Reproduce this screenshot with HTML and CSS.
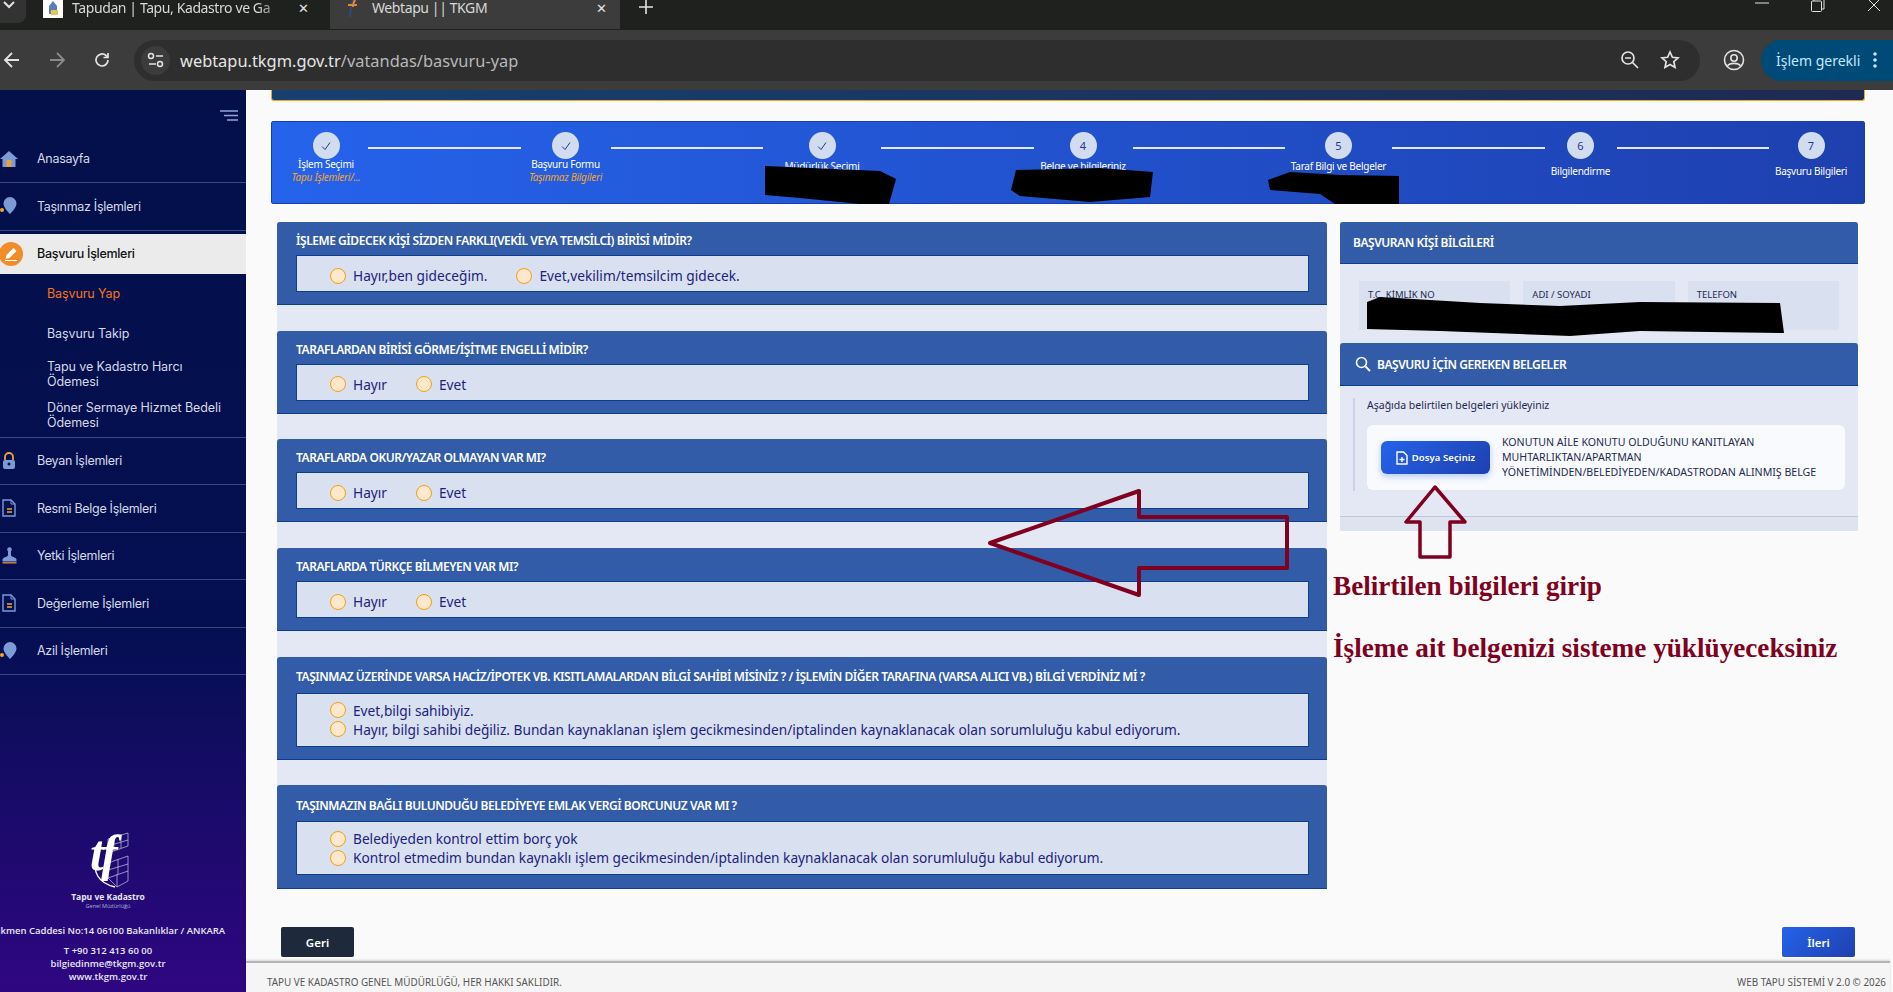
FILE: index.html
```html
<html>
<head>
  <title>Webtapu || TKGM</title>
  <link rel="stylesheet" href="styles.css">
</head>
<body>

<div class="browser">
  <div class="tabs">
    <div class="tab-menu">
      <svg width="14" height="14" viewBox="0 0 14 14"><path d="M2 2l5 5 5-5" fill="none" stroke="#e3e3e3" stroke-width="2"/></svg>
    </div>
    <div class="tab">
      <svg class="favicon" width="20" height="20" viewBox="0 0 20 20"><rect width="20" height="20" fill="#fff"/><path d="M10 3l4 5v8H6V8z" fill="#5b7fb5"/><rect x="8" y="12" width="7" height="5" fill="#e6c65a"/></svg>
      <span class="tab-title tab-fade">Tapudan | Tapu, Kadastro ve Ga</span>
      <span class="tab-close">&#10005;</span>
    </div>
    <div class="tab tab-active">
      <svg class="favicon" width="20" height="20" viewBox="0 0 20 20"><path d="M11 1c-1 5-3 9-3 18" fill="none" stroke="#2d4a7c" stroke-width="2"/><path d="M6 7h9" stroke="#e8862e" stroke-width="2"/><path d="M14 0c-2 3-3 6-3 9" fill="none" stroke="#e8862e" stroke-width="2"/></svg>
      <span class="tab-title">Webtapu || TKGM</span>
      <span class="tab-close">&#10005;</span>
    </div>
    <div class="tab-new">
      <svg width="14" height="14" viewBox="0 0 14 14"><path d="M7 0v14M0 7h14" stroke="#e3e3e3" stroke-width="1.6"/></svg>
    </div>
    <div class="win-controls">
      <svg width="14" height="10" viewBox="0 0 14 10"><path d="M0 5h14" stroke="#e3e3e3" stroke-width="1"/></svg>
      <svg width="14" height="14" viewBox="0 0 14 14"><rect x="0.5" y="3" width="10" height="10.500" rx="1" fill="none" stroke="#e3e3e3"/><path d="M3 3V1h9a1 1 0 0 1 1 1v9h-2.500" fill="none" stroke="#e3e3e3"/></svg>
      <svg width="14" height="14" viewBox="0 0 14 14"><path d="M1 1l12 12M13 1L1 13" stroke="#e3e3e3" stroke-width="1"/></svg>
    </div>
  </div>
  <div class="toolbar">
    <svg class="nav-icon" width="18" height="18" viewBox="0 0 18 18"><path d="M16 9H2M9 2L2 9l7 7" fill="none" stroke="#e3e3e3" stroke-width="1.800"/></svg>
    <svg class="nav-icon" width="18" height="18" viewBox="0 0 18 18"><path d="M2 9h14M9 2l7 7-7 7" fill="none" stroke="#8a8a8a" stroke-width="1.800"/></svg>
    <svg class="nav-icon" width="18" height="18" viewBox="0 0 18 18"><path d="M15 9a6 6 0 1 1-2-4.500L15 6.500M15 2v4.500h-4.500" fill="none" stroke="#e3e3e3" stroke-width="1.700"/></svg>
    <div class="omnibox">
      <div class="site-info">
        <svg width="18" height="16" viewBox="0 0 18 16"><circle cx="4" cy="4" r="2.500" fill="none" stroke="#e3e3e3" stroke-width="1.500"/><path d="M9 4h7M2 12h7" stroke="#e3e3e3" stroke-width="1.500"/><circle cx="13" cy="12" r="2.500" fill="none" stroke="#e3e3e3" stroke-width="1.500"/></svg>
      </div>
      <span class="url">webtapu.tkgm.gov.tr<span class="url-path">/vatandas/basvuru-yap</span></span>
      <svg class="omni-icon" width="20" height="20" viewBox="0 0 20 20"><circle cx="8" cy="8" r="6" fill="none" stroke="#e3e3e3" stroke-width="1.700"/><path d="M5 8h6M12.500 12.500L18 18" stroke="#e3e3e3" stroke-width="1.700"/></svg>
      <svg class="omni-icon" width="20" height="20" viewBox="0 0 20 20"><path d="M10 2l2.400 5.300 5.600.6-4.200 3.800 1.200 5.700L10 14.500l-5 2.900 1.200-5.700L2 7.900l5.600-.6z" fill="none" stroke="#e3e3e3" stroke-width="1.700"/></svg>
    </div>
    <svg class="profile" width="22" height="22" viewBox="0 0 22 22"><circle cx="11" cy="11" r="9.500" fill="none" stroke="#e3e3e3" stroke-width="1.600"/><circle cx="11" cy="9" r="3.200" fill="none" stroke="#e3e3e3" stroke-width="1.600"/><path d="M4.500 17c2-3.500 11-3.500 13 0" fill="none" stroke="#e3e3e3" stroke-width="1.600"/></svg>
    <div class="action-pill">
      <span>İşlem gerekli</span>
      <svg width="4" height="18" viewBox="0 0 4 18"><circle cx="2" cy="3" r="1.800" fill="#c2e7ff"/><circle cx="2" cy="9" r="1.800" fill="#c2e7ff"/><circle cx="2" cy="15" r="1.800" fill="#c2e7ff"/></svg>
    </div>
  </div>
</div>

<div class="app">
  <aside class="sidebar">
    <div class="burger">
      <svg width="18" height="11" viewBox="0 0 18 11"><path d="M0 1h18M4 5.500h14M7 10h11" stroke="#8ea6d8" stroke-width="1.500"/></svg>
    </div>
    <a class="menu-item menu-first">
      <svg class="menu-icon" width="18" height="18" viewBox="0 0 18 18"><path d="M9 1L0 9h2.500v8h13V9H18z" fill="#7b9ad6"/><rect x="6.500" y="10" width="5" height="7" fill="#e8a33d"/></svg>
      Anasayfa
    </a>
    <a class="menu-item">
      <svg class="menu-icon" width="18" height="18" viewBox="0 0 18 18"><path d="M10 0a6.500 6.500 0 0 1 6.500 6.500C16.500 11 10 17 10 17S3.500 11 3.500 6.500A6.500 6.500 0 0 1 10 0z" fill="#7b9ad6"/><circle cx="2" cy="13" r="2" fill="#f5a623"/></svg>
      Taşınmaz İşlemleri
    </a>
    <a class="menu-item menu-active">
      <span class="menu-badge">
        <svg width="14" height="14" viewBox="0 0 14 14"><path d="M9.500 1l3 3-7 7-4 1 1-4z" fill="#fff"/><path d="M1 13.500h12" stroke="#fff"/></svg>
      </span>
      Başvuru İşlemleri
    </a>
    <div class="submenu">
      <a class="sub-item sub-current">Başvuru Yap</a>
      <a class="sub-item">Başvuru Takip</a>
      <a class="sub-item sub-double">Tapu ve Kadastro Harcı<br>Ödemesi</a>
      <a class="sub-item sub-double">Döner Sermaye Hizmet Bedeli<br>Ödemesi</a>
    </div>
    <a class="menu-item">
      <svg class="menu-icon" width="18" height="18" viewBox="0 0 18 18"><path d="M5 8V5a4 4 0 0 1 8 0v3" fill="none" stroke="#e8a33d" stroke-width="1.800"/><rect x="3" y="8" width="12" height="9" rx="2" fill="#7b9ad6"/><circle cx="9" cy="12" r="1.500" fill="#04104a"/></svg>
      Beyan İşlemleri
    </a>
    <a class="menu-item">
      <svg class="menu-icon" width="18" height="18" viewBox="0 0 18 18"><path d="M3 1h8l4 4v12H3z" fill="none" stroke="#7b9ad6" stroke-width="1.400"/><path d="M11 1v4h4" fill="none" stroke="#7b9ad6"/><path d="M7 10h5M7 13h5" stroke="#f5a623" stroke-width="1.400"/></svg>
      Resmi Belge İşlemleri
    </a>
    <a class="menu-item">
      <svg class="menu-icon" width="18" height="18" viewBox="0 0 18 18"><circle cx="9.500" cy="2.500" r="2.300" fill="#7b9ad6"/><path d="M8 4h3v4c0 2 5 2 5.500 4.500V14.500H2.500V12.500C3 10 8 10 8 8z" fill="#7b9ad6"/><rect x="2.500" y="15" width="14" height="1.600" fill="#c47a24"/></svg>
      Yetki İşlemleri
    </a>
    <a class="menu-item">
      <svg class="menu-icon" width="18" height="18" viewBox="0 0 18 18"><path d="M3 1h8l4 4v12H3z" fill="none" stroke="#7b9ad6" stroke-width="1.400"/><path d="M11 1v4h4" fill="none" stroke="#7b9ad6"/><path d="M7 10h5M7 13h5" stroke="#f5a623" stroke-width="1.400"/></svg>
      Değerleme İşlemleri
    </a>
    <a class="menu-item">
      <svg class="menu-icon" width="18" height="18" viewBox="0 0 18 18"><path d="M10 0a6.500 6.500 0 0 1 6.500 6.500C16.500 11 10 17 10 17S3.500 11 3.500 6.500A6.500 6.500 0 0 1 10 0z" fill="#7b9ad6"/><circle cx="2" cy="13" r="2" fill="#f5a623"/></svg>
      Azil İşlemleri
    </a>

    <div class="side-footer">
      <svg class="logo" width="40" height="56" viewBox="0 0 40 56">
        <path d="M18 6L38 0V13L18 20ZM18 30L38 23V38L18 45ZM24 4V18M31 2V15M28 26V41M18 13L38 7M18 37L38 31" fill="none" stroke="#c3cbe2" stroke-width="0.700"/>
        <path d="M18 45L27 54M38 38V48L27 54M27 41V54" fill="none" stroke="#c3cbe2" stroke-width="0.700"/>
        <path d="M7 26C2 38 8 50 25 54" fill="none" stroke="#fff" stroke-width="1.400"/>
        <text class="logo-text" x="0" y="37">tf</text>
      </svg>
      <div class="org">Tapu ve Kadastro</div>
      <div class="org-sub">Genel Müdürlüğü</div>
      <div class="address">Dikmen Caddesi No:14 06100 Bakanlıklar / ANKARA</div>
      <div class="contact">T +90 312 413 60 00</div>
      <div class="contact">bilgiedinme@tkgm.gov.tr</div>
      <div class="contact">www.tkgm.gov.tr</div>
    </div>
  </aside>

  <main class="main">
    <div class="content">
      <div class="topbar"></div>

      <div class="stepper">
        <div class="step s1">
          <div class="circle"><svg width="12" height="12" viewBox="0 0 12 12"><path d="M2 6.500l3 3 5-7" fill="none" stroke="#1e3a8a" stroke-width="1"/></svg></div>
          <div class="step-text"><div class="step-label">İşlem Seçimi</div><div class="step-sub">Tapu İşlemleri/...</div></div>
        </div>
        <div class="step-line"></div>
        <div class="step s2">
          <div class="circle"><svg width="12" height="12" viewBox="0 0 12 12"><path d="M2 6.500l3 3 5-7" fill="none" stroke="#1e3a8a" stroke-width="1"/></svg></div>
          <div class="step-text"><div class="step-label">Başvuru Formu</div><div class="step-sub">Taşınmaz Bilgileri</div></div>
        </div>
        <div class="step-line"></div>
        <div class="step s3">
          <div class="circle"><svg width="12" height="12" viewBox="0 0 12 12"><path d="M2 6.500l3 3 5-7" fill="none" stroke="#1e3a8a" stroke-width="1"/></svg></div>
          <div class="step-text step-raised"><div class="step-label">Müdürlük Seçimi</div></div>
        </div>
        <div class="step-line"></div>
        <div class="step s4">
          <div class="circle">4</div>
          <div class="step-text step-raised"><div class="step-label">Belge ve bilgileriniz</div></div>
        </div>
        <div class="step-line"></div>
        <div class="step s5">
          <div class="circle">5</div>
          <div class="step-text step-raised"><div class="step-label">Taraf Bilgi ve Belgeler</div></div>
        </div>
        <div class="step-line"></div>
        <div class="step s6">
          <div class="circle">6</div>
          <div class="step-text"><div class="step-label">Bilgilendirme</div></div>
        </div>
        <div class="step-line"></div>
        <div class="step s7">
          <div class="circle">7</div>
          <div class="step-text"><div class="step-label">Başvuru Bilgileri</div></div>
        </div>
      </div>

      <div class="columns">
        <div class="questions">
          <div class="card">
            <div class="card-title">İŞLEME GİDECEK KİŞİ SİZDEN FARKLI(VEKİL VEYA TEMSİLCİ) BİRİSİ MİDİR?</div>
            <div class="answers">
              <label class="radio"><span class="dot"></span>Hayır,ben gideceğim.</label>
              <label class="radio"><span class="dot"></span>Evet,vekilim/temsilcim gidecek.</label>
            </div>
          </div>
          <div class="card">
            <div class="card-title">TARAFLARDAN BİRİSİ GÖRME/İŞİTME ENGELLİ MİDİR?</div>
            <div class="answers">
              <label class="radio"><span class="dot"></span>Hayır</label>
              <label class="radio"><span class="dot"></span>Evet</label>
            </div>
          </div>
          <div class="card">
            <div class="card-title">TARAFLARDA OKUR/YAZAR OLMAYAN VAR MI?</div>
            <div class="answers">
              <label class="radio"><span class="dot"></span>Hayır</label>
              <label class="radio"><span class="dot"></span>Evet</label>
            </div>
          </div>
          <div class="card">
            <div class="card-title">TARAFLARDA TÜRKÇE BİLMEYEN VAR MI?</div>
            <div class="answers">
              <label class="radio"><span class="dot"></span>Hayır</label>
              <label class="radio"><span class="dot"></span>Evet</label>
            </div>
          </div>
          <div class="card card-tall">
            <div class="card-title">TAŞINMAZ ÜZERİNDE VARSA HACİZ/İPOTEK VB. KISITLAMALARDAN BİLGİ SAHİBİ MİSİNİZ ? / İŞLEMİN DİĞER TARAFINA (VARSA ALICI VB.) BİLGİ VERDİNİZ Mİ ?</div>
            <div class="answers answers-stack">
              <label class="radio"><span class="dot"></span>Evet,bilgi sahibiyiz.</label>
              <label class="radio"><span class="dot"></span>Hayır, bilgi sahibi değiliz. Bundan kaynaklanan işlem gecikmesinden/iptalinden kaynaklanacak olan sorumluluğu kabul ediyorum.</label>
            </div>
          </div>
          <div class="card card-tall">
            <div class="card-title">TAŞINMAZIN BAĞLI BULUNDUĞU BELEDİYEYE EMLAK VERGİ BORCUNUZ VAR MI ?</div>
            <div class="answers answers-stack">
              <label class="radio"><span class="dot"></span>Belediyeden kontrol ettim borç yok</label>
              <label class="radio"><span class="dot"></span>Kontrol etmedim bundan kaynaklı işlem gecikmesinden/iptalinden kaynaklanacak olan sorumluluğu kabul ediyorum.</label>
            </div>
          </div>
        </div>

        <div class="side-panel">
          <div class="panel-head">BAŞVURAN KİŞİ BİLGİLERİ</div>
          <div class="person">
            <div class="field">T.C. KİMLİK NO</div>
            <div class="field">ADI / SOYADI</div>
            <div class="field">TELEFON</div>
          </div>
          <div class="panel-head panel-head-icon">
            <svg width="16" height="16" viewBox="0 0 16 16"><circle cx="6.500" cy="6.500" r="5" fill="none" stroke="#fff" stroke-width="1.600"/><path d="M10.500 10.500L15 15" stroke="#fff" stroke-width="1.800"/></svg>
            BAŞVURU İÇİN GEREKEN BELGELER
          </div>
          <div class="docs">
            <div class="docs-inner">
              <div class="docs-hint">Aşağıda belirtilen belgeleri yükleyiniz</div>
              <div class="doc-card">
                <button class="file-btn">
                  <svg width="12" height="14" viewBox="0 0 12 14"><path d="M1 1h6.500L11 4.500V13H1z" fill="none" stroke="#fff" stroke-width="1.400"/><path d="M6 6v5M3.500 8.500h5" stroke="#fff" stroke-width="1.400"/></svg>
                  Dosya Seçiniz
                </button>
                <div class="doc-name">KONUTUN AİLE KONUTU OLDUĞUNU KANITLAYAN MUHTARLIKTAN/APARTMAN YÖNETİMİNDEN/BELEDİYEDEN/KADASTRODAN ALINMIŞ BELGE</div>
              </div>
            </div>
          </div>
          <div class="panel-foot"></div>
        </div>
      </div>

      <div class="actions">
        <button class="btn btn-back">Geri</button>
        <button class="btn btn-next">İleri</button>
      </div>
    </div>

    <footer class="footer">
      <span>TAPU VE KADASTRO GENEL MÜDÜRLÜĞÜ, HER HAKKI SAKLIDIR.</span>
      <span>WEB TAPU SİSTEMİ V 2.0 © 2026</span>
    </footer>
  </main>
</div>

<!-- marks drawn on top of the screenshot -->
<svg class="marks" width="1893" height="992" viewBox="0 0 1893 992">
  <path class="blackout" d="M765 166L880 171L896 179L889 204L860 204L800 198L765 195Z"/>
  <path class="blackout" d="M1016 170L1100 168L1153 172L1150 197L1090 202L1020 196L1011 190Z"/>
  <path class="blackout" d="M1290 172L1340 175L1399 176V204H1335L1320 194L1270 190L1268 180Z"/>
  <path class="blackout" d="M1367 302L1380 297L1480 303L1560 306L1640 302L1780 303L1784 333L1640 331L1570 336L1440 331L1367 329Z"/>
  <path class="arrow" d="M990 543L1139 491V517H1287V568H1139V595Z"/>
  <path class="arrow arrow-up" d="M1435 487L1406 522H1420V557H1450V522H1465Z"/>
  <text class="note" x="1333" y="595">Belirtilen bilgileri girip</text>
  <text class="note" x="1333" y="657">İşleme ait belgenizi sisteme yüklüyeceksiniz</text>
</svg>

</body>
</html>
```

FILE: styles.css
```css
* {
  box-sizing: border-box;
}

html,
body {
  margin: 0;
  height: 992px;
  overflow: hidden;
}

body {
  position: relative;
  display: flex;
  flex-direction: column;
  font-family: "Noto Sans", sans-serif;
  background: #fafafa;
}

/* browser chrome */
.browser {
  height: 90px;
  flex: none;
}

.tabs {
  height: 30px;
  background: #1f211f;
  display: flex;
  align-items: flex-start;
  color: #e3e3e3;
  overflow: hidden;
}

.tab-menu {
  width: 26px;
  height: 23px;
  background: #333;
  border-radius: 0 0 8px 0;
  padding: 0 0 0 2px;
}

.tab {
  display: flex;
  align-items: center;
  height: 30px;
  padding: 0 21px 13px 0;
  margin-top: -1px;
}

.tab:nth-child(2) {
  width: 304px;
  padding-left: 17px;
}

.tab-active {
  width: 290px;
  background: #3c3c3c;
  padding-left: 12px;
  padding-right: 13px;
}

.favicon {
  flex: none;
  margin-right: 9px;
}

.tab-active .favicon {
  margin-right: 10px;
}

.tab-title {
  flex: 1;
  white-space: nowrap;
  overflow: hidden;
  font-size: 14px;
  letter-spacing: -0.4px;
  color: #d8d8d8;
}

.tab-fade {
  -webkit-mask-image: linear-gradient(to right, #000 85%, transparent);
}

.tab-close {
  font-size: 13px;
  margin-left: 8px;
}

.tab-new {
  margin: 0 0 0 19px;
}

.win-controls {
  margin-left: auto;
  display: flex;
  gap: 42px;
  padding: 0 12px 0 0;
  margin-top: -2px;
}

.toolbar {
  height: 60px;
  background: #3c3c3c;
  display: flex;
  align-items: center;
  padding-left: 3px;
}

.nav-icon {
  margin-right: 27px;
}

.omnibox {
  width: 1566px;
  margin-left: -4px;
  height: 41px;
  background: #2e2e2e;
  border-radius: 21px;
  display: flex;
  align-items: center;
  padding: 0 20px 0 7px;
}

.site-info {
  width: 29px;
  height: 29px;
  border-radius: 50%;
  background: #3c3c3c;
  display: flex;
  align-items: center;
  justify-content: center;
  margin-right: 10px;
}

.url {
  flex: 1;
  font-size: 16.400px;
  color: #e6e6e6;
}

.url-path {
  color: #b8b8b8;
}

.omni-icon {
  margin-left: 20px;
}

.profile {
  margin-left: 23px;
}

.action-pill {
  margin-left: 16px;
  flex: 1;
  height: 41px;
  background: #004a77;
  border-radius: 21px 0 0 21px;
  color: #c2e7ff;
  font-size: 14px;
  display: flex;
  align-items: center;
  padding-left: 15px;
  gap: 13px;
}

/* page */
.app {
  flex: 1;
  display: flex;
  min-height: 0;
}

.sidebar {
  width: 246px;
  flex: none;
  background: linear-gradient(to bottom, #04104a 0%, #040f52 60%, #2f0682 100%);
  display: flex;
  flex-direction: column;
  font-family: "Inter", sans-serif;
  overflow: hidden;
}

.burger {
  height: 45px;
  padding: 20px 8px 0 0;
  text-align: right;
  flex: none;
}

.menu-item {
  height: 47.500px;
  flex: none;
  display: flex;
  align-items: center;
  font-size: 12.500px;
  letter-spacing: -0.3px;
  color: #d6d9e8;
  border-bottom: 1px solid #3c4683;
}

.menu-first {
  height: 48px;
}

.menu-icon {
  width: 18px;
  margin: 0 19px 0 0;
  flex: none;
}

.menu-active {
  height: 40px;
  margin-top: 3px;
  background: #ebebeb;
  color: #111;
  border-bottom: none;
  font-weight: 500;
}

.menu-badge {
  width: 24px;
  height: 24px;
  margin: 0 14px 0 -1px;
  background: #f28c28;
  border-radius: 50%;
  display: flex;
  align-items: center;
  justify-content: center;
  flex: none;
}

.submenu {
  height: 164px;
  flex: none;
  padding-left: 47px;
  border-bottom: 1px solid #3c4683;
}

.sub-item {
  display: flex;
  align-items: center;
  height: 40px;
  font-size: 12.500px;
  letter-spacing: -0.1px;
  color: #d6d9e8;
  line-height: 15px;
}

.sub-double {
  display: block;
  height: 41px;
  padding-top: 5px;
}

.sub-current {
  color: #f97316;
}

.side-footer {
  margin-top: auto;
  height: 159px;
  flex: none;
  text-align: center;
  color: #e6e8f4;
  font-family: "Open Sans", sans-serif;
  font-weight: 600;
  font-size: 9.500px;
  display: flex;
  flex-direction: column;
  align-items: center;
  padding-right: 30px;
  white-space: nowrap;
}

.logo {
  margin-left: 4px;
  flex: none;
  overflow: visible;
}

.logo-text {
  font-family: "Liberation Serif", serif;
  font-style: italic;
  font-size: 50px;
  fill: #fff;
  letter-spacing: -3px;
}

.org {
  font-size: 8.500px;
  font-weight: 700;
  margin-top: 2px;
}

.org-sub {
  font-size: 5.500px;
  font-weight: 400;
  color: #aab2cf;
  margin-bottom: 14px;
}

.address {
  margin-bottom: 7px;
}

.contact {
  line-height: 13px;
}

.main {
  flex: 1;
  display: flex;
  flex-direction: column;
  min-width: 0;
}

.content {
  flex: 1;
  min-height: 0;
  padding: 0 35px 0 25px;
}

.topbar {
  height: 11px;
  width: 1594px;
  background: linear-gradient(to right, #17406e, #1e2a52);
  border: 1px solid #f5a623;
  border-top: none;
  border-radius: 0 0 3px 3px;
}

.stepper {
  margin-top: 20px;
  width: 1594px;
  height: 83px;
  background: linear-gradient(to right, #2563eb, #1e40af);
  border: 1px solid #1a3fa8;
  border-radius: 2px;
  padding: 10px 18px 0 19px;
  display: flex;
  align-items: flex-start;
}

.step {
  flex: none;
  display: flex;
  flex-direction: column;
  align-items: center;
  text-align: center;
  white-space: nowrap;
}

.s1 { width: 70px; }
.s2 { width: 76px; }
.s3 { width: 104px; }
.s4 { width: 85px; }
.s5 { width: 93px; }
.s6 { width: 58px; }
.s7 { width: 70px; }

.circle {
  width: 27px;
  height: 27px;
  border-radius: 50%;
  background: #d2dcf0;
  color: #1e3a8a;
  font-size: 11px;
  display: flex;
  align-items: center;
  justify-content: center;
}

.step-text {
  height: 26px;
  margin-top: -1px;
  display: flex;
  flex-direction: column;
  justify-content: center;
  line-height: 13px;
  letter-spacing: -0.25px;
}

.step-raised {
  justify-content: flex-start;
  padding-top: 2px;
}

.step-label {
  font-size: 10px;
  color: #fff;
}

.step-sub {
  font-size: 10px;
  font-style: italic;
  color: #f5a623;
}

.step-line {
  flex: 1;
  height: 2px;
  margin: 15px 7px 0;
  background: #e3e8f4;
}

.columns {
  margin-top: 18px;
  margin-left: 6px;
  display: flex;
  gap: 13px;
  align-items: flex-start;
}

.questions {
  width: 1050px;
  flex: none;
  background: #e3e8f4;
  display: flex;
  flex-direction: column;
  gap: 25.700px;
}

.card {
  background: #325ca8;
  border-bottom: 1px solid #0b3d91;
  border-radius: 3px 3px 0 0;
  padding: 0 18px 12px 19px;
}

.card-title {
  height: 33px;
  display: flex;
  align-items: center;
  font-size: 12px;
  font-weight: 600;
  letter-spacing: -0.45px;
  color: #fff;
  padding-top: 4px;
}

.card-tall .card-title {
  height: 36px;
}

.card-tall:last-child {
  padding-bottom: 13px;
}

.answers {
  min-height: 37px;
  background: #d9e0f0;
  border: 1px solid #0b3d91;
  padding: 4px 0 0 33px;
  display: flex;
  align-items: center;
  gap: 29px;
}

.answers-stack {
  flex-direction: column;
  align-items: flex-start;
  gap: 0;
  padding-top: 7px;
  padding-bottom: 7px;
}

.radio {
  display: flex;
  align-items: center;
  height: 19px;
  font-size: 13.700px;
  color: #1a237e;
  white-space: nowrap;
}

.dot {
  width: 16px;
  height: 16px;
  margin-right: 7px;
  border: 1.500px solid #f59e0b;
  border-radius: 50%;
  background: #fde8cc;
  flex: none;
}

.side-panel {
  width: 518px;
  flex: none;
  background: #e3e8f4;
}

.panel-head {
  height: 42px;
  background: #325ca8;
  border-bottom: 1px solid #0b3d91;
  border-radius: 3px 3px 0 0;
  padding: 0 13px;
  display: flex;
  align-items: center;
  gap: 6px;
  font-size: 12px;
  font-weight: 600;
  letter-spacing: -0.45px;
  color: #fff;
}

.panel-head-icon {
  height: 43px;
  padding-left: 15px;
}

.person {
  height: 79px;
  padding: 17px 19px 0;
  display: flex;
  gap: 13px;
}

.field {
  flex: 1;
  height: 49px;
  background: #d9e0f0;
  padding: 7px 9px;
  font-size: 9.500px;
  color: #1e2a50;
}

.docs {
  height: 130px;
  padding: 12px 13px 0;
}

.docs-inner {
  height: 93px;
  border-left: 2px solid #c8d3ea;
  padding-left: 12px;
}

.docs-hint {
  height: 27px;
  font-size: 10.500px;
  line-height: 14px;
  color: #1e2a50;
}

.doc-card {
  height: 65px;
  background: #f8fafe;
  border-radius: 6px;
  padding: 0 14px;
  display: flex;
  align-items: center;
  gap: 12px;
}

.file-btn {
  width: 109px;
  height: 33px;
  flex: none;
  border: none;
  border-radius: 6px;
  background: linear-gradient(135deg, #2563eb, #1e40af);
  box-shadow: 0 3px 6px rgba(37, 99, 235, 0.3);
  color: #fff;
  font-family: "Noto Sans", sans-serif;
  font-size: 9.500px;
  font-weight: 600;
  letter-spacing: 0.1px;
  display: flex;
  align-items: center;
  justify-content: center;
  gap: 4px;
}

.doc-name {
  font-size: 10.600px;
  line-height: 15px;
  color: #1f2a50;
}

.panel-foot {
  height: 15px;
  background: #dde3ef;
  border-top: 1px solid #bfc7d6;
  border-radius: 0 0 3px 3px;
}

.actions {
  margin-top: 38px;
  margin-left: 10px;
  width: 1574px;
  display: flex;
  justify-content: space-between;
}

.btn {
  width: 73px;
  height: 30px;
  border: none;
  border-radius: 2px;
  color: #fff;
  font-family: "Noto Sans", sans-serif;
  font-size: 11.500px;
  font-weight: 600;
}

.btn-back {
  background: #1e293b;
}

.btn-next {
  background: linear-gradient(135deg, #2563eb, #1e40af);
}

.footer {
  height: 31px;
  flex: none;
  margin-right: 3px;
  background: #f5f5f5;
  border-top: 2px solid #b5b5b5;
  box-shadow: 0 -1px 2px rgba(0, 0, 0, 0.15);
  padding: 12px 4px 0 21px;
  display: flex;
  justify-content: space-between;
  font-size: 9.900px;
  color: #555;
  font-family: "Noto Sans", sans-serif;
}

/* marks on top */
.marks {
  position: absolute;
  top: 0;
  left: 0;
  pointer-events: none;
}

.blackout {
  fill: #000;
}

.arrow {
  fill: none;
  stroke: #800020;
  stroke-width: 4;
  stroke-linejoin: round;
}

.arrow-up {
  stroke-width: 3.500;
}

.note {
  font-family: "Liberation Serif", serif;
  font-weight: 700;
  font-size: 27.200px;
  fill: #800020;
}
```
